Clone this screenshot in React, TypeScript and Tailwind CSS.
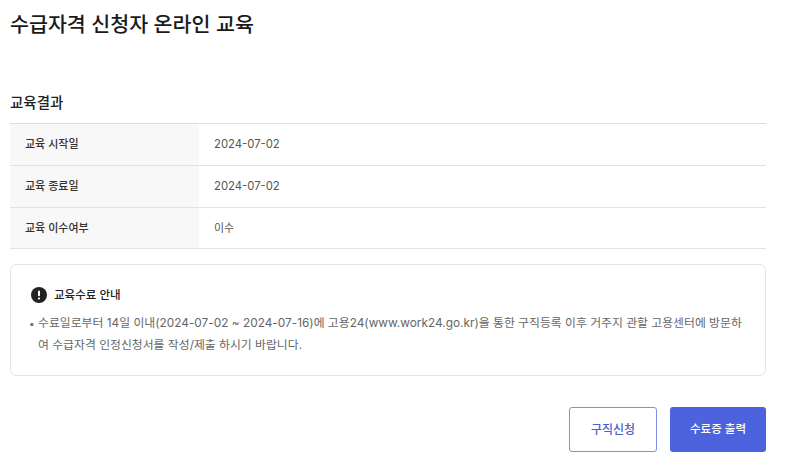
function Row({ label, value, height }: { label: string; value: React.ReactNode; height: string }) {
  return (
    <div className={`flex border-b border-[#e2e2e2] ${height}`}>
      <div className="flex w-[189px] items-center bg-[#f8f8f8] pl-[15px] text-[11px] font-medium text-[#333333]">{label}</div>
      <div className="flex flex-1 items-center pl-[15px] text-[11.3px] text-[#555555]">{value}</div>
    </div>
  );
}

export default function App() {
  return (
    <div className="h-[469px] w-[788px] overflow-hidden bg-white pl-[10px] pr-[22px] font-['Inter','Noto_Sans_CJK_KR',sans-serif] text-[#222222]">
      <h1 className="pt-[9px] text-[20.6px] leading-[32px] font-medium text-[#1a1a1a]">수급자격 신청자 온라인 교육</h1>
      <h2 className="mt-[50px] text-[14.5px] leading-[24px] font-medium">교육결과</h2>
      <div className="mt-[8px] border-t border-[#dddddd]">
        <Row label="교육 시작일" value="2024-07-02" height="h-[42px]" />
        <Row label="교육 종료일" value="2024-07-02" height="h-[42px]" />
        <Row label="교육 이수여부" value={<span className="text-[11px]">이수</span>} height="h-[41px]" />
      </div>
      <div className="mt-[15px] h-[112px] rounded-[6px] border border-[#e4e4e4] px-[20px] pt-[20px]">
        <div className="flex items-center gap-[7px]">
          <svg width="16" height="16" viewBox="0 0 16 16" className="shrink-0">
            <circle cx="8" cy="8" r="8" fill="#222222" />
            <rect x="7" y="3.5" width="2" height="5.8" rx="1" fill="#ffffff" />
            <circle cx="8" cy="11.5" r="1.1" fill="#ffffff" />
          </svg>
          <span className="text-[11.5px] leading-[20px] font-medium">교육수료 안내</span>
        </div>
        <div className="mt-[7px] flex text-[11.85px] leading-[22px] text-[#666666]">
          <span className="-ml-[2px] w-[9px] shrink-0 text-[10px]">•</span>
          <p>수료일로부터 14일 이내(2024-07-02 ~ 2024-07-16)에 고용24(www.work24.go.kr)을 통한 구직등록 이후 거주지 관할 고용센터에 방문하여 수급자격 인정신청서를 작성/제출 하시기 바랍니다.</p>
        </div>
      </div>
      <div className="mt-[31px] flex justify-end gap-[13px]">
        <button className="h-[45px] w-[88px] rounded-[3px] border border-[#7f8fe6] bg-white text-[12px] font-medium text-[#4a5fd0]">구직신청</button>
        <button className="h-[45px] w-[96px] rounded-[3px] bg-[#4c63dd] text-[11.5px] font-medium text-white">수료증 출력</button>
      </div>
    </div>
  );
}
